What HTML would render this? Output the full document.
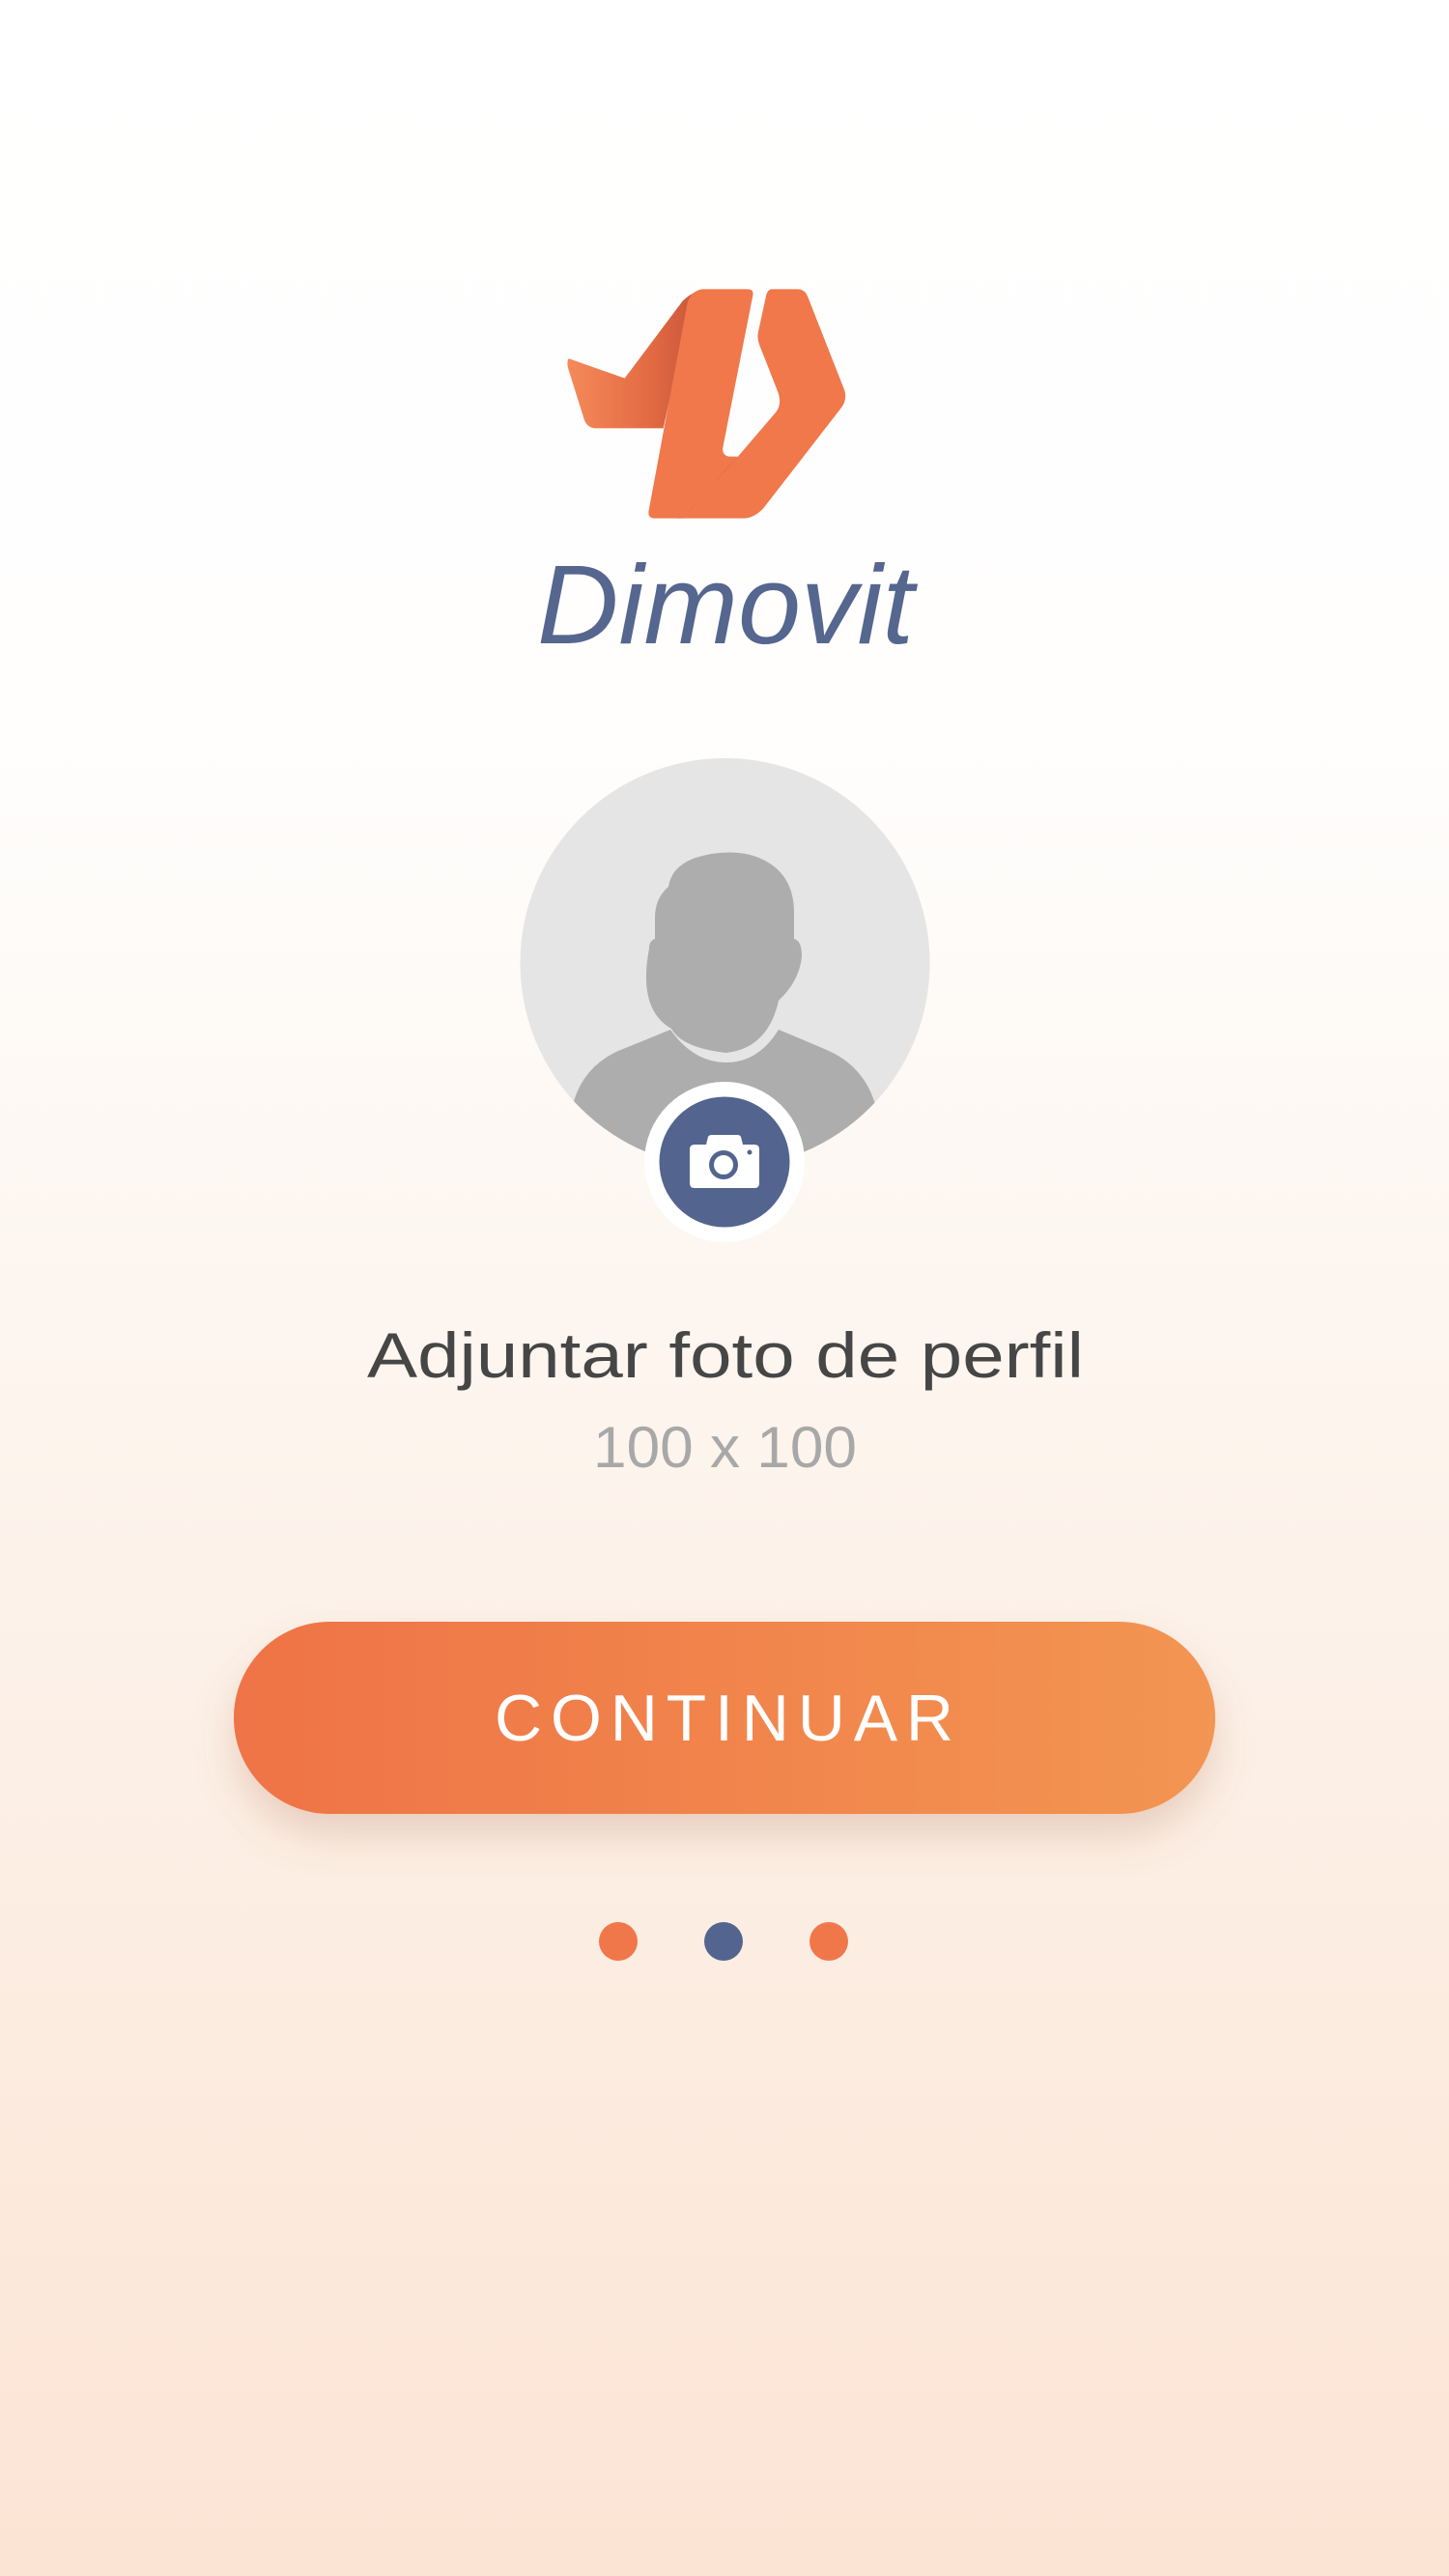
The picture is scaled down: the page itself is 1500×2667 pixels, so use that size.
<!DOCTYPE html>
<html><head><meta charset="utf-8"><style>
html,body{margin:0;padding:0;width:1500px;height:2667px;overflow:hidden}
body{background:linear-gradient(to bottom,#ffffff 0%,#fffefd 28%,#fdf6f0 50%,#fcede2 75%,#fce4d4 100%)}
svg{position:absolute;left:0;top:0}
</style></head><body>
<svg width="1500" height="2667" viewBox="0 0 1500 2667" xmlns="http://www.w3.org/2000/svg">
<defs>
<linearGradient id="btn" x1="0" x2="1" y1="0" y2="0"><stop offset="0" stop-color="#ef7346"/><stop offset="1" stop-color="#f39552"/></linearGradient>
<linearGradient id="wing" x1="0" x2="1" y1="0" y2="0"><stop offset="0" stop-color="#f58a5a"/><stop offset="0.6" stop-color="#e36a43"/><stop offset="1" stop-color="#c3543a"/></linearGradient>
<linearGradient id="fold" x1="0" x2="1" y1="1" y2="0"><stop offset="0" stop-color="#f07a4a"/><stop offset="1" stop-color="#c9573c"/></linearGradient>
<filter id="sh" x="-20%" y="-30%" width="140%" height="180%"><feDropShadow dx="0" dy="22" stdDeviation="20" flood-color="#b07050" flood-opacity="0.25"/></filter>
<clipPath id="cc"><circle cx="750.5" cy="997" r="212"/></clipPath>
</defs>
<!-- logo -->
<g transform="translate(540,270) scale(0.3333)">
<path d="M150,305 L320,365 L500,125 Q530,95 570,88 L530,110 L440,520 L230,520 Q205,520 195,495 L143,330 Q140,300 150,305 Z" fill="url(#wing)"/>
<path d="M775,88 L860,88 Q880,90 888,110 L1000,395 Q1015,430 990,460 L750,770 Q720,800 690,800 L480,800 L670,610 L790,470 Q810,445 795,405 L740,265 Q730,240 735,220 L760,105 Q765,90 775,88 Z" fill="#f0784a"/>
<path d="M560,88 L705,88 Q722,90 718,108 L625,580 Q622,605 645,608 L670,608 L545,750 Q510,800 470,800 L410,800 Q390,798 395,775 L515,130 Q525,95 560,88 Z" fill="#f0784a"/>
<path d="M670,608 L545,750 Q510,800 470,800 L500,800 L670,610 Z" fill="url(#fold)"/>
</g>
<text x="556" y="666" font-family="Liberation Sans, sans-serif" font-style="italic" font-size="116" fill="#55668f" textLength="390" lengthAdjust="spacingAndGlyphs">Dimovit</text>
<!-- avatar -->
<circle cx="750.5" cy="997" r="212" fill="#e5e5e5"/>
<g clip-path="url(#cc)" fill="#adadad">
<path d="M695,1065 Q660,1045 672,982 Q672,974 678,972 L678,950 Q678,930 692,918 Q695,897 720,888 Q752,878 780,886 Q822,900 822,945 L822,972 Q830,974 830,990 Q828,1015 806,1036 Q795,1085 752,1090 Q706,1085 695,1065 Z"/>
<path d="M694,1066 Q718,1100 752,1100 Q785,1100 806,1066 Q835,1078 858,1088 Q893,1104 905,1140 L960,1300 L540,1300 L594,1140 Q605,1104 640,1088 Q665,1078 694,1066 Z"/>
</g>
<circle cx="750" cy="1203" r="83" fill="#ffffff"/>
<circle cx="750" cy="1203" r="67.5" fill="#53658e"/>
<path d="M719,1185 L731,1185 L733,1177 Q734,1175 737,1175 L763,1175 Q766,1175 767,1177 L769,1185 L781,1185 Q786,1185 786,1190 L786,1225 Q786,1230 781,1230 L719,1230 Q714,1230 714,1225 L714,1190 Q714,1185 719,1185 Z" fill="#fff"/>
<circle cx="749" cy="1206" r="12.5" fill="none" stroke="#53658e" stroke-width="5"/>
<circle cx="776" cy="1193" r="2.5" fill="#53658e"/>
<!-- texts -->
<text x="380" y="1426" font-family="Liberation Sans, sans-serif" font-size="66" fill="#464646" textLength="742" lengthAdjust="spacingAndGlyphs">Adjuntar foto de perfil</text>
<text x="614" y="1519" font-family="Liberation Sans, sans-serif" font-size="60" fill="#a8a8a8" textLength="273" lengthAdjust="spacingAndGlyphs">100 x 100</text>
<!-- button -->
<rect x="242" y="1679" width="1016" height="199" rx="99.5" fill="url(#btn)" filter="url(#sh)"/>
<text x="512" y="1802" font-family="Liberation Sans, sans-serif" font-size="68" fill="#ffffff" textLength="475" lengthAdjust="spacing">CONTINUAR</text>
<!-- dots -->
<circle cx="640" cy="2010" r="20" fill="#f0774a"/>
<circle cx="749" cy="2010" r="20" fill="#53658e"/>
<circle cx="858" cy="2010" r="20" fill="#f0774a"/>
</svg>
</body></html>
